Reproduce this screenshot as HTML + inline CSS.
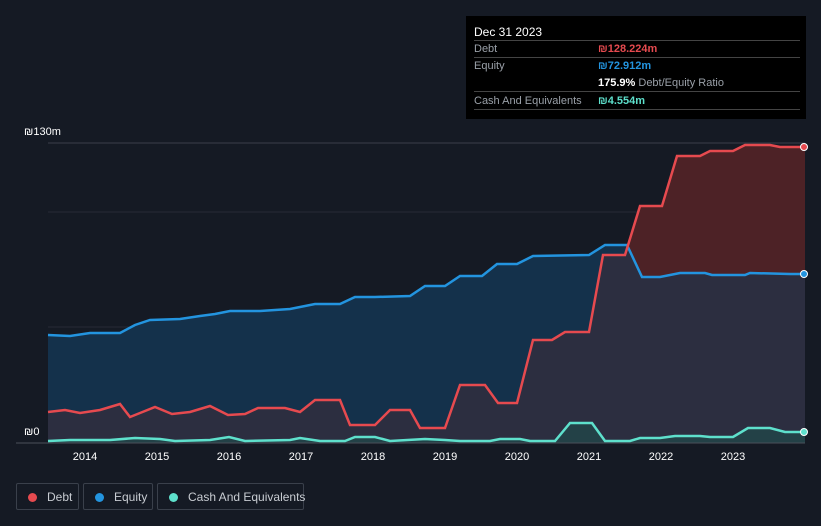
<!DOCTYPE html>
<html><head><meta charset="utf-8"><style>
html,body{margin:0;background:#151a24;width:821px;height:526px;overflow:hidden;font-family:"Liberation Sans",sans-serif;position:relative}
.tt{position:absolute;left:466px;top:16px;width:340px;height:103px;background:#000;color:#fff;font-size:11px}
.tt .r{position:absolute;left:8px;right:6px;border-bottom:1px solid #444;height:16px;line-height:16px;white-space:nowrap}
.lg{position:absolute;top:483px;height:27px;border:1px solid #3a404b;border-radius:2px;color:#c8ccd2;font-size:12px;line-height:26px;box-sizing:border-box;white-space:nowrap}
.lg i{display:inline-block;width:9px;height:9px;border-radius:50%;margin:0 10px 0 11px;vertical-align:-1px}
</style></head><body>
<svg width="821" height="526" style="position:absolute;left:0;top:0">
<defs>
<clipPath id="dc"><path d="M48,412L65,410L80,413L100,410L120,404L130,417L140,413L155,407L172,414L190,412L210,406L228,415L245,414L258,408L285,408L300,412L315,400L340,400L350,425L375,425L390,410L410,410L420,428L445,428L460,385L485,385L498,403L517,403L533,340L552,340L565,332L589,332L603,255L625,255L640,206L662,206L677,156L700,156L710,151L733,151L745,145L770,145L780,147L805,147L805,443L48,443Z"/></clipPath>
</defs>
<line x1="48" y1="143" x2="805" y2="143" stroke="#3a3f4a"/>
<line x1="48" y1="212" x2="805" y2="212" stroke="#262b36"/>
<line x1="48" y1="327" x2="805" y2="327" stroke="#262b36"/>
<path fill="#14314b" d="M48,335L70,336L90,333L120,333L135,325L150,320L180,319L200,316L215,314L230,311L260,311L290,309L315,304L340,304L355,297L375,297L410,296L425,286L445,286L460,276L482,276L497,264L517,264L533,256L589,255L605,245L627,245L642,277L660,277L680,273L705,273L712,275L745,275L750,273L790,274L805,274L805,443L48,443Z"/>
<path fill="#4d2226" d="M48,412L65,410L80,413L100,410L120,404L130,417L140,413L155,407L172,414L190,412L210,406L228,415L245,414L258,408L285,408L300,412L315,400L340,400L350,425L375,425L390,410L410,410L420,428L445,428L460,385L485,385L498,403L517,403L533,340L552,340L565,332L589,332L603,255L625,255L640,206L662,206L677,156L700,156L710,151L733,151L745,145L770,145L780,147L805,147L805,443L48,443Z"/>
<path clip-path="url(#dc)" fill="#2c2e40" d="M48,335L70,336L90,333L120,333L135,325L150,320L180,319L200,316L215,314L230,311L260,311L290,309L315,304L340,304L355,297L375,297L410,296L425,286L445,286L460,276L482,276L497,264L517,264L533,256L589,255L605,245L627,245L642,277L660,277L680,273L705,273L712,275L745,275L750,273L790,274L805,274L805,443L48,443Z"/>
<path fill="#1f4a4a" opacity=".7" d="M48,441L70,440L110,440L135,438L160,439L175,441L210,440L229,437L245,441L290,440L300,438L320,441L345,441L355,437L375,437L390,441L425,439L445,440L460,441L490,441L500,439L520,439L530,441L555,441L570,423L592,423L605,441L630,441L640,438L660,438L675,436L700,436L710,437L733,437L748,428L770,428L785,432L805,432L805,443L48,443Z"/>
<path fill="none" stroke="#2394df" stroke-width="2.5" d="M48,335L70,336L90,333L120,333L135,325L150,320L180,319L200,316L215,314L230,311L260,311L290,309L315,304L340,304L355,297L375,297L410,296L425,286L445,286L460,276L482,276L497,264L517,264L533,256L589,255L605,245L627,245L642,277L660,277L680,273L705,273L712,275L745,275L750,273L790,274L805,274"/>
<path fill="none" stroke="#e64a4f" stroke-width="2.5" d="M48,412L65,410L80,413L100,410L120,404L130,417L140,413L155,407L172,414L190,412L210,406L228,415L245,414L258,408L285,408L300,412L315,400L340,400L350,425L375,425L390,410L410,410L420,428L445,428L460,385L485,385L498,403L517,403L533,340L552,340L565,332L589,332L603,255L625,255L640,206L662,206L677,156L700,156L710,151L733,151L745,145L770,145L780,147L805,147"/>
<path fill="none" stroke="#5ee0cc" stroke-width="2.5" d="M48,441L70,440L110,440L135,438L160,439L175,441L210,440L229,437L245,441L290,440L300,438L320,441L345,441L355,437L375,437L390,441L425,439L445,440L460,441L490,441L500,439L520,439L530,441L555,441L570,423L592,423L605,441L630,441L640,438L660,438L675,436L700,436L710,437L733,437L748,428L770,428L785,432L805,432"/>
<line x1="16" y1="443" x2="805" y2="443" stroke="#4a505a"/>
<circle cx="804" cy="147" r="3.5" fill="#e64a4f" stroke="#fff" stroke-width="1"/>
<circle cx="804" cy="274" r="3.5" fill="#2394df" stroke="#fff" stroke-width="1"/>
<circle cx="804" cy="432" r="3.5" fill="#5ee0cc" stroke="#fff" stroke-width="1"/>
<g fill="#fff" font-size="11" text-anchor="middle">
<text x="85" y="460">2014</text><text x="157" y="460">2015</text><text x="229" y="460">2016</text><text x="301" y="460">2017</text><text x="373" y="460">2018</text><text x="445" y="460">2019</text><text x="517" y="460">2020</text><text x="589" y="460">2021</text><text x="661" y="460">2022</text><text x="733" y="460">2023</text>
</g>
<text x="24" y="135" fill="#fff" font-size="11">₪130m</text>
<text x="24" y="435" fill="#fff" font-size="11">₪0</text>
</svg>
<div class="tt">
<div class="r" style="top:8px;font-size:12px">Dec 31 2023</div>
<div class="r" style="top:25px"><span style="color:#9aa0a8">Debt</span><span style="position:absolute;left:124px;color:#e64a4f;font-weight:bold">₪128.224m</span></div>
<div class="r" style="top:42px;border:none"><span style="color:#9aa0a8">Equity</span><span style="position:absolute;left:124px;color:#2394df;font-weight:bold">₪72.912m</span></div>
<div class="r" style="top:59px"><span style="position:absolute;left:124px"><b>175.9%</b> <span style="color:#9aa0a8">Debt/Equity Ratio</span></span></div>
<div class="r" style="top:77px"><span style="color:#9aa0a8">Cash And Equivalents</span><span style="position:absolute;left:124px;color:#5ee0cc;font-weight:bold">₪4.554m</span></div>
</div>
<div class="lg" style="left:16px;width:63px"><i style="background:#e64a4f"></i>Debt</div>
<div class="lg" style="left:83px;width:70px"><i style="background:#2394df"></i>Equity</div>
<div class="lg" style="left:157px;width:147px"><i style="background:#5ee0cc"></i>Cash And Equivalents</div>
</body></html>
